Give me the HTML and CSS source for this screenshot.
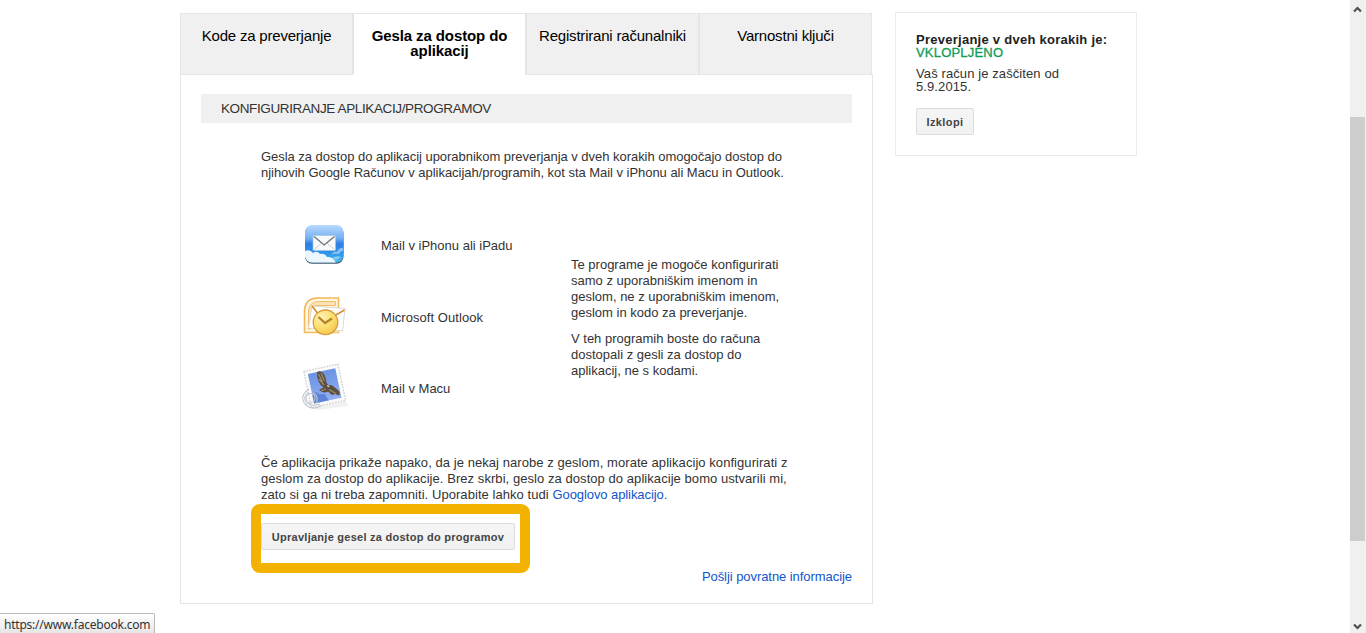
FILE: index.html
```html
<!DOCTYPE html>
<html lang="sl">
  <head>
    <meta charset="utf-8"/>
    <title>Preverjanje v dveh korakih</title>
    <link rel="stylesheet" href="styles.css">
  </head>
  <body>
    <div class="page">
      <div class="main">
        <div class="tabs">
          <div class="tab">Kode za preverjanje</div>
          <div class="tab active">Gesla za dostop do<br>aplikacij</div>
          <div class="tab">Registrirani računalniki</div>
          <div class="tab">Varnostni ključi</div>
        </div>
        <div class="panel">
          <h2>KONFIGURIRANJE APLIKACIJ/PROGRAMOV</h2>
          <div class="content">
            <p class="intro">
              Gesla za dostop do aplikacij uporabnikom preverjanja v dveh korakih omogočajo dostop do<br>
              njihovih Google Računov v aplikacijah/programih, kot sta Mail v iPhonu ali Macu in Outlook.
            </p>
            <div class="programs">
              <ul>
                <li>
                  <svg width="48" height="48" viewBox="0 0 48 48">
                    <defs>
                      <linearGradient id="sky" x1="0" y1="0" x2="0" y2="1">
                        <stop offset="0" stop-color="#b9d9fb"/>
                        <stop offset=".35" stop-color="#75b0f4"/>
                        <stop offset=".5" stop-color="#2f80e2"/>
                        <stop offset=".75" stop-color="#2c93ea"/>
                        <stop offset="1" stop-color="#4bbcf2"/>
                      </linearGradient>
                      <clipPath id="tile"><rect x="5" y="5" width="38.500" height="37.500" rx="7"/></clipPath>
                    </defs>
                    <rect x="5" y="6" width="38.500" height="37.800" rx="7" fill="#45566b"/>
                    <rect x="5" y="5" width="38.500" height="37.500" rx="7" fill="url(#sky)"/>
                    <g clip-path="url(#tile)" fill="#fff">
                      <path d="M5 31q5-2 8 2q4-3 7 1q5-1 7 3q6-1 9 6H5z" opacity=".9"/>
                      <path d="M31 35q3-5 6-3q3-5 6-4v3q-3 0-4 3q-4-1-8 1z" opacity=".45"/>
                      <path d="M32 38q5-3 9-1l-5 3z" opacity=".4"/>
                    </g>
                    <rect x="13" y="15.500" width="22.500" height="15" rx="1" fill="#f7f9fb" stroke="#a8c3dd" stroke-width=".7"/>
                    <path d="M14 29.500l8-7M34.500 29.500l-8-7" stroke="#c3c9ce" stroke-width=".8"/>
                    <path d="M14 16.500l10.200 8.500 10.300-8.500" fill="none" stroke="#69737c" stroke-width="1.300"/>
                  </svg>
                  <span class="name">Mail v iPhonu ali iPadu</span>
                </li>
                <li>
                  <svg width="48" height="48" viewBox="0 0 48 48">
                    <defs>
                      <linearGradient id="frame" x1="0" y1="0" x2="1" y2="1">
                        <stop offset="0" stop-color="#f0b052"/>
                        <stop offset="1" stop-color="#f6c56a"/>
                      </linearGradient>
                      <radialGradient id="clock" cx=".35" cy=".3" r=".8">
                        <stop offset="0" stop-color="#fff2b2"/>
                        <stop offset=".6" stop-color="#fbdc69"/>
                        <stop offset="1" stop-color="#f3c048"/>
                      </radialGradient>
                    </defs>
                    <path d="M4.500 40.500V19Q5 6 18 6h20.500v34.500z" fill="#fff6e2" stroke="url(#frame)" stroke-width="1.600"/>
                    <path d="M8.500 37V19q1-9.500 10-9.500h17v4H15q-2 0-2 3L10.500 37z" fill="#fbe3b4" stroke="#f2bd6c"/>
                    <path d="M12 14l33 2.500L42.500 39 8.500 36z" fill="#fff" stroke="#d4d2cd" stroke-width=".8"/>
                    <path d="M12 14l7 9M44.500 18L34 24" stroke="#d98f38" stroke-width="1.800"/>
                    <circle cx="25.500" cy="30.300" r="12.300" fill="url(#clock)" stroke="#d59c40" stroke-width="1.300"/>
                    <path d="M18.500 25l6.500 6 7-4.500" fill="none" stroke="#b5832a" stroke-width="2.300"/>
                  </svg>
                  <span class="name outlook">Microsoft Outlook</span>
                </li>
                <li>
                  <svg width="48" height="48" viewBox="0 0 48 48">
                    <defs>
                      <linearGradient id="stamp" x1="0" y1="0" x2="0" y2="1">
                        <stop offset="0" stop-color="#6a92e4"/>
                        <stop offset="1" stop-color="#94b0f0"/>
                      </linearGradient>
                    </defs>
                    <path d="M12 45l34-7 2 5-30 4z" fill="#f1f1f1"/>
                    <g transform="rotate(-12 24 22)">
                      <rect x="7" y="4.500" width="35" height="37" fill="#fafafa" stroke="#cfcfcf" stroke-width="1.400" stroke-dasharray="1.600 1.300"/>
                      <rect x="10.500" y="8" width="28" height="30" fill="url(#stamp)"/>
                      <path d="M10.500 38v-8l4-3 3 3 5 1 3 7z" fill="#5c83d8"/>
                    </g>
                    <path d="M17 9q4-2 7 2l2 5 .5 4 2.500 2.500q2-1 4 .5l6 5q1.500 3 0 4.500l-4-1.500-3 1-4-3.500q-3 1.500-6 .5l-3-2 4.500-2.500q-7-5-6.500-15.500z" fill="#5d4f3e"/>
                    <path d="M18.500 11l4 8M21 10l3.500 8M19 16l5 6M29 26.500l7 4M21 28l5-2" stroke="#a08c6e" stroke-width="1.200"/>
                    <path d="M27 22l2.500 1-1.500 1.500z" fill="#f0eee8"/>
                    <g fill="none" stroke="#c0c7d1" stroke-width="1.100">
                      <path d="M9 26q-10 7-4 15 7 7 16 2M8 30q-6 6-1 10 5 4 13 1M14 30q5 4 2 11"/>
                      <circle cx="10.500" cy="35" r="4.500"/>
                    </g>
                  </svg>
                  <span class="name">Mail v Macu</span>
                </li>
              </ul>
              <div class="notes">
                <p>
                  Te programe je mogoče konfigurirati<br>
                  samo z uporabniškim imenom in<br>
                  geslom, ne z uporabniškim imenom,<br>
                  geslom in kodo za preverjanje.
                </p>
                <p>
                  V teh programih boste do računa<br>
                  dostopali z gesli za dostop do<br>
                  aplikacij, ne s kodami.
                </p>
              </div>
            </div>
            <p class="hint">
              Če aplikacija prikaže napako, da je nekaj narobe z geslom, morate aplikacijo konfigurirati z<br>
              geslom za dostop do aplikacije. Brez skrbi, geslo za dostop do aplikacije bomo ustvarili mi,<br>
              zato si ga ni treba zapomniti. Uporabite lahko tudi <a>Googlovo aplikacijo.</a>
            </p>
            <div class="highlight">
              <button class="manage">Upravljanje gesel za dostop do programov</button>
            </div>
          </div>
          <a class="feedback">Pošlji povratne informacije</a>
        </div>
      </div>
      <div class="status">
        <h3>Preverjanje v dveh korakih je:</h3>
        <div class="on">VKLOPLJENO</div>
        <p>Vaš račun je zaščiten od<br>5.9.2015.</p>
        <button>Izklopi</button>
      </div>
    </div>
    <div class="scrollbar">
      <svg width="15" height="17" viewBox="0 0 15 17"><path d="M4 11.500L7.500 8l3.500 3.500" fill="none" stroke="#505050" stroke-width="2.200"/></svg>
      <div class="thumb"></div>
      <svg width="15" height="17" viewBox="0 0 15 17"><path d="M4 8.500L7.500 12 11 8.500" fill="none" stroke="#505050" stroke-width="2.200"/></svg>
    </div>
    <div class="url">https://www.facebook.com</div>
  </body>
</html>
```
FILE: styles.css
```css
* {
  margin: 0;
  padding: 0;
  box-sizing: border-box;
}

body {
  display: flex;
  height: 633px;
  overflow: hidden;
  background: #fff;
  color: #333;
  font: 13px/16px Arial, "Liberation Sans", sans-serif;
  white-space: nowrap;
}

.page {
  flex: 1;
  display: flex;
  align-items: flex-start;
  gap: 22px;
  padding: 12px 0 0 180px;
}

.main {
  width: 693px;
  padding-top: 1px;
}

.tabs {
  display: flex;
  height: 62px;
  position: relative;
}

.tab {
  width: 173px;
  padding-top: 14px;
  border: 1px solid #e5e5e5;
  background: #f0f0f0;
  color: #000;
  font-size: 15px;
  line-height: 15px;
  letter-spacing: -0.2px;
  text-align: center;
}

.tab.active {
  background: #fff;
  border-bottom-color: #fff;
  font-weight: bold;
  letter-spacing: -0.1px;
}

.panel {
  height: 530px;
  margin-top: -1px;
  padding: 19px 20px 0;
  border: 1px solid #e5e5e5;
}

h2 {
  height: 29px;
  padding-left: 20px;
  background: #f0f0f0;
  font-size: 13.5px;
  font-weight: normal;
  line-height: 29px;
  letter-spacing: -0.38px;
}

.content {
  padding: 26px 0 0 60px;
}

.intro {
  letter-spacing: -0.035px;
}

.programs {
  display: flex;
  align-items: center;
  margin: 29px 0 30.5px;
}

.programs ul {
  width: 310px;
  padding-left: 39px;
  list-style: none;
}

.programs li {
  display: flex;
  align-items: center;
  gap: 33px;
  height: 71.5px;
}

.programs svg {
  margin-bottom: 3px;
  overflow: visible;
}

.outlook {
  padding-top: 1px;
  letter-spacing: 0.05px;
}

.notes {
  padding-top: 1.5px;
}

.notes p + p {
  margin-top: 10px;
}

.hint {
  letter-spacing: 0.06px;
}

.hint a {
  letter-spacing: -0.08px;
}

a {
  color: #15c;
}

button {
  height: 27px;
  padding-top: 2px;
  border: 1px solid #dcdcdc;
  border-radius: 2px;
  background: linear-gradient(#f5f5f5, #f1f1f1);
  color: #444;
  font: bold 11px/23px Arial, "Liberation Sans", sans-serif;
  letter-spacing: 0.26px;
}

.highlight {
  width: 279px;
  height: 69px;
  margin: 1px 0 0 -10px;
  padding-top: 9px;
  border: 10px solid #f3b200;
  border-radius: 9px;
}

.highlight button {
  display: block;
  width: 254px;
}

.feedback {
  display: block;
  margin-top: -4px;
  letter-spacing: -0.06px;
  text-align: right;
}

.status {
  width: 242px;
  height: 144px;
  padding: 20px;
  border: 1px solid #ebebeb;
  line-height: 13px;
}

.status h3 {
  color: #222;
  font-size: 13px;
  letter-spacing: 0.26px;
}

.on {
  color: #0f9d58;
  letter-spacing: 0.2px;
  -webkit-text-stroke: 0.3px #0f9d58;
}

.status p {
  margin: 8px 0 15px;
  letter-spacing: 0.1px;
}

.status button {
  width: 58px;
  letter-spacing: 0.4px;
}

.scrollbar {
  display: flex;
  flex-direction: column;
  justify-content: space-between;
  width: 16px;
  background: #f0f0f0;
}

.thumb {
  width: 15px;
  height: 424px;
  margin-top: 25px;
  background: #cdcdcd;
}

.url {
  position: absolute;
  left: 0;
  bottom: 0;
  width: 155px;
  height: 20px;
  padding-left: 4px;
  border: 1px solid #bbb;
  border-width: 1px 1px 0 0;
  border-radius: 0 2px 0 0;
  background: linear-gradient(#fff, #e6e6e6);
  font: 12px/22px "Noto Sans", "Open Sans", sans-serif;
  letter-spacing: -0.22px;
}
```
